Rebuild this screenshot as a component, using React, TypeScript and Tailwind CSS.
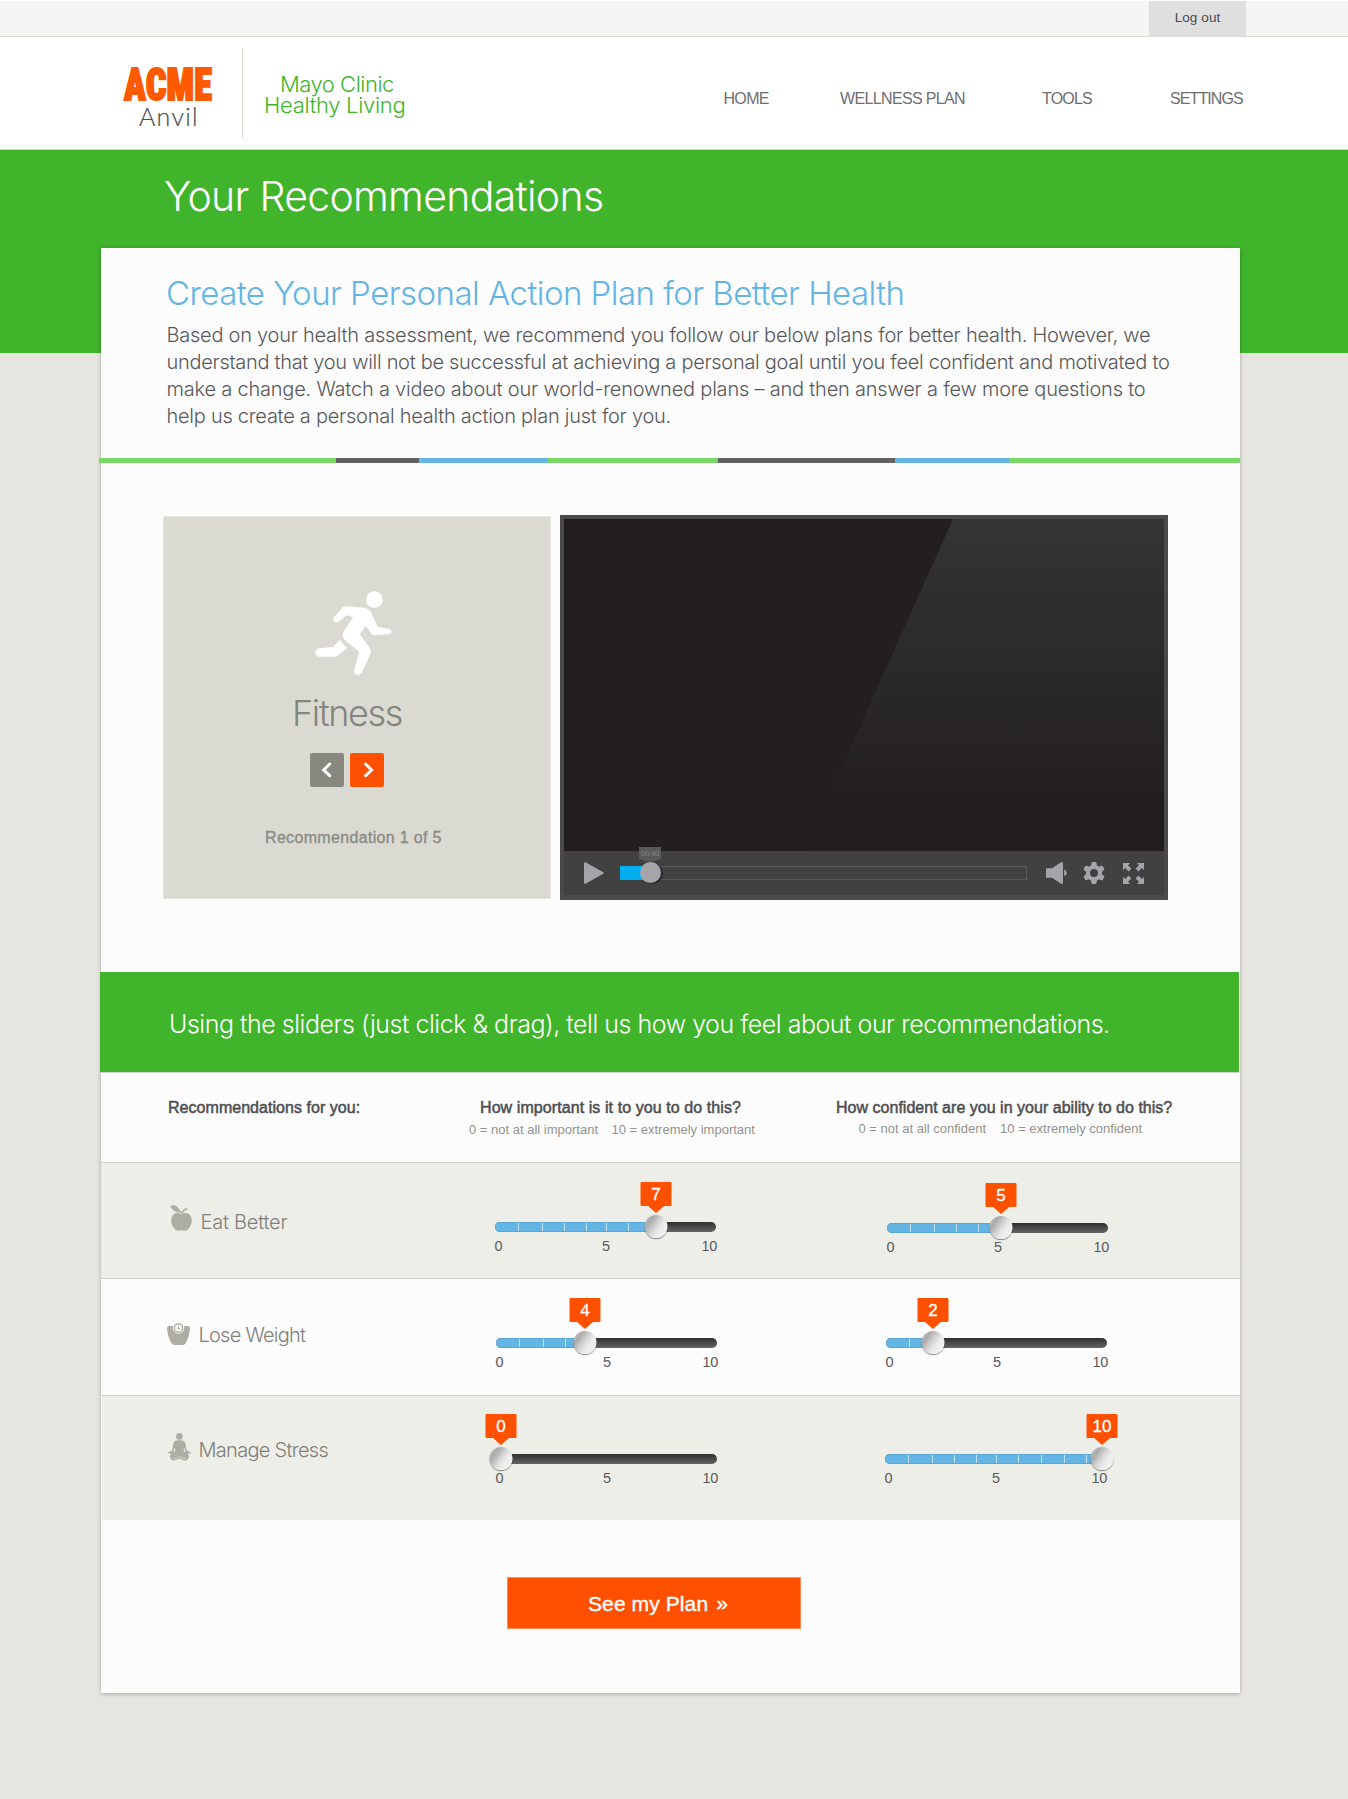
import type { ReactNode } from 'react';

const TICKS = [23, 47, 69.5, 91, 111.7, 133, 156.5, 179, 201];

function RunnerIcon() {
  return (
    <svg viewBox="0 0 231 253" className="h-[84.3px] w-[77px]" fill="#fff">
      <circle cx="178" cy="26" r="25" />
      <path d="M92 46L148 50Q161 52 168 64L189 108L222 113Q231 116 230 123Q228 130 221 130L177 133Q172 133 169 128L153 105L134 128L164 170Q170 178 166 189L142 243Q137 253 127 252Q116 249 117 239L133 182L90 148Q79 136 87 120L114 79L95 73L70 93Q62 96 57 91Q52 85 57 79L81 51Q85 46 92 46Z" />
      <path d="M75 146Q82 161 97 170L71 192Q65 197 57 197H14Q2 196 0 185Q1 174 13 172L54 168Z" />
    </svg>
  );
}

function AppleIcon() {
  return (
    <svg viewBox="0 0 22 26" className="h-[26px] w-[22px]" fill="#adada3">
      <path d="M0.2 0.9C4.6-.9 8.6.9 10 7.2C5.4 7.4 2.4 5.6.2.9Z" />
      <path d="M10.2 8.6C9.8 6.4 8 3.6 5 2.4L5.3 1.9C8.6 3 10.7 5.4 11.4 7.4C12.4 5.2 13.8 3.9 16.4 2.9L18 4.4C15 5 13.3 6.4 12.7 8.6Z" />
      <path d="M11.4 9.6C14 7.6 17.6 7.5 19.8 9.7C22.6 12.6 22.3 18.2 19.6 22.3C17.6 25.4 15.8 26.4 13.4 25.6C12 25.2 11 25.2 9.6 25.6C7.2 26.4 5.4 25.4 3.4 22.3C.7 18.2.4 12.6 3.2 9.7C5.4 7.5 8.8 7.6 11.4 9.6Z" />
    </svg>
  );
}

function ScaleIcon() {
  return (
    <svg viewBox="0 0 23 22" className="h-[22px] w-[23px]" fill="#adada3">
      <path d="M1.6 3H21.4Q23.2 3.4 22.9 5.6C22.6 11 21.4 15 18.6 20.3Q17.6 22 15.8 22H7.2Q5.4 22 4.4 20.3C1.6 15 .4 11 .1 5.6Q-.2 3.4 1.6 3Z" />
      <circle cx="11.5" cy="5" r="5.3" stroke="#fcfcfc" strokeWidth="0.9" />
      <circle cx="11.5" cy="5" r="3.5" fill="#fcfcfc" />
      <circle cx="11.5" cy="5.4" r="1.1" />
      <path d="M11.1 2.5h.8v3h-.8z" />
    </svg>
  );
}

function YogaIcon() {
  return (
    <svg viewBox="0 0 23 28" className="h-[28px] w-[23px]" fill="#adada3">
      <ellipse cx="11.4" cy="3.4" rx="3.3" ry="3.4" />
      <path d="M11.4 7.2C16 7.2 17.3 8.6 17.7 11.4L18.6 17.6L22.6 19.2Q23.4 20.1 22.2 20.6L19.6 20.4C21.4 22.2 21.2 24 20 26Q18.6 28 15.8 27.2L11.4 25.8L7 27.2Q4.2 28 2.8 26C1.6 24 1.6 22.2 3.2 20.4L.8 20.6Q-.6 20.1.4 19.2L4.2 17.6L5.1 11.4C5.5 8.6 6.8 7.2 11.4 7.2Z" />
      <path d="M6.4 14.6L5.6 18.8L6.6 19.4L7.2 16.8ZM16.4 14.6L17.2 18.8L16.2 19.4L15.6 16.8Z" fill="#eeeee8" />
      <path d="M5 25.6C8 26 9.6 24.6 11.4 23.6C13.2 24.6 15 26 18 25.6" fill="none" stroke="#eeeee8" strokeWidth="0.6" />
    </svg>
  );
}

function Slider({ value, knob, className }: { value: number; knob: number; className: string }) {
  return (
    <div className={`relative w-[222px] ${className}`}>
      <div className="relative mt-10 h-2.5 w-[221px] overflow-hidden rounded-full bg-linear-to-b from-[#303030] to-[#656565]">
        <div
          className="relative h-full overflow-hidden border-y border-[#5aa5d4] bg-[#62b5e5]"
          style={{ width: knob }}
        >
          {TICKS.filter((t) => t < knob - 5).map((t) => (
            <span key={t} className="absolute inset-y-0 w-px bg-[#c3e2f4]" style={{ left: t }} />
          ))}
        </div>
      </div>
      <div
        className="absolute top-0 flex w-[31px] -translate-x-1/2 flex-col items-center"
        style={{ left: knob + 0.5 }}
      >
        <span className="h-6 w-full rounded-[1px] bg-[#ff5000] pt-px text-center text-[17px] leading-6 text-white [-webkit-text-stroke:0.3px_white]">
          {value}
        </span>
        <span className="h-[7px] w-4 bg-[#ff5000] [clip-path:polygon(0_0,100%_0,50%_100%)]" />
      </div>
      <div
        className="absolute top-[33px] size-[23px] -translate-x-1/2 rounded-full bg-linear-[125deg,#c4c4c4_8%,#a9a9a9_25%,#d6d6d6_48%,#ececec_65%,#f4f4f4] shadow-[0_1px_1px_rgba(0,0,0,0.45)]"
        style={{ left: knob }}
      />
      <div className="mt-1 flex w-[223px] justify-between text-[14.5px] leading-5 tracking-[-0.3px] text-[#58595b]">
        <span className="w-4">0</span>
        <span className="w-2">5</span>
        <span className="w-4">10</span>
      </div>
    </div>
  );
}

function LightLabel({ className, children }: { className: string; children: ReactNode }) {
  return (
    <span className={`font-[Inter] text-[20px] leading-6 font-light whitespace-nowrap text-[#80807a] ${className}`}>
      {children}
    </span>
  );
}

export default function App() {
  return (
    <div className="min-h-[1799px] w-[1348px] overflow-hidden bg-[#e6e5e0] font-['Liberation_Sans',Arial,sans-serif]">
      <div className="flex h-[37px] justify-end border-t border-b border-t-white border-b-[#dcdcd8] bg-[#f4f4f2] pr-[102px]">
        <a className="w-[97px] bg-[#dfdfdf] pt-[7px] text-center text-[13.5px] leading-5 tracking-[0.1px] text-[#4a4a4a]">
          Log out
        </a>
      </div>

      <header className="flex h-[113px] border-b border-[#cfd0cd] bg-white pl-[124px]">
        <div className="w-[90px] pt-[31px]">
          <div className="w-[105px] origin-left scale-x-[0.805] font-[Roboto] text-[45px] leading-[34px] font-black tracking-[0.2px] whitespace-nowrap text-[#ff5a00] [-webkit-text-stroke:2px_#ff5a00] [font-stretch:75%]">
            ACME
          </div>
          <div className="pl-[15px] font-[Lato] text-[25px] leading-[28px] font-light tracking-[1.3px] text-[#4d4e50] [-webkit-text-stroke:0.2px_#4d4e50]">
            Anvil
          </div>
        </div>
        <div className="mt-[11px] ml-7 h-[90px] w-px bg-[#dedcd6]" />
        <div className="ml-[21px] w-[142px] pt-[36.5px] font-[Inter] text-[22px] leading-[21.6px] font-light whitespace-nowrap text-[#40b42b]">
          <div className="pl-4 tracking-[-0.49px]">Mayo Clinic</div>
          <div className="tracking-[-0.3px]">Healthy Living</div>
        </div>
        <nav className="ml-auto flex w-[624.5px] pt-[51.5px] text-[16px] leading-5 whitespace-nowrap text-[#6d6e70]">
          <a className="w-[116.5px] tracking-[-0.68px]">HOME</a>
          <a className="w-[202px] tracking-[-0.65px]">WELLNESS PLAN</a>
          <a className="w-[128px] tracking-[-0.82px]">TOOLS</a>
          <a className="tracking-[-0.9px]">SETTINGS</a>
        </nav>
      </header>

      <div className="h-[203px] bg-[#40b42b] pt-[22px] pl-[164px]">
        <h1 className="font-[Inter] text-[41px] leading-[48px] font-light tracking-[-0.7px] text-white">
          Your Recommendations
        </h1>
      </div>

      <main className="mx-auto -mt-[105px] ml-[101px] h-[1445px] w-[1139px] bg-[#fcfcfc] shadow-[0_1px_4px_rgba(0,0,0,0.28)]">
        <section className="h-[210px] pt-[25px] pl-[65px] font-[Inter] font-light whitespace-nowrap">
          <h2 className="text-[33px] leading-10 tracking-[-0.53px] text-[#62b5e5]">
            Create Your Personal Action Plan for Better Health
          </h2>
          <p className="mt-[9px] pl-[0.5px] text-[20px] leading-[27px] text-[#58595b]">
            <span className="block tracking-[-0.25px]">
              Based on your health assessment, we recommend you follow our below plans for better health. However, we
            </span>
            <span className="block tracking-[-0.292px]">
              understand that you will not be successful at achieving a personal goal until you feel confident and motivated to
            </span>
            <span className="block tracking-[-0.205px]">
              make a change. Watch a video about our world-renowned plans – and then answer a few more questions to
            </span>
            <span className="block tracking-[-0.26px]">
              help us create a personal health action plan just for you.
            </span>
          </p>
        </section>

        <div className="-ml-0.5 flex h-[5px] w-[1141px]">
          <span className="w-[237px] bg-[#78d967]" />
          <span className="w-[83px] bg-[#616161]" />
          <span className="w-[129px] bg-[#62b5e5]" />
          <span className="w-[170px] bg-[#78d967]" />
          <span className="w-[177px] bg-[#616161]" />
          <span className="w-[114px] bg-[#62b5e5]" />
          <span className="flex-1 bg-[#78d967]" />
        </div>

        <section className="flex h-[509px] items-start pt-[52px] pl-[62px]">
          <div className="mt-px h-[383px] w-[388px] border border-[#e6e6e0] bg-[#dadad2] pt-[74px]">
            <div className="pl-[151px]">
              <RunnerIcon />
            </div>
            <div className="mt-[16px] pl-[128px] font-[Inter] text-[36px] leading-[44px] font-light tracking-[-1.35px] text-[#85857f]">
              Fitness
            </div>
            <div className="mt-[18px] flex gap-1.5 pl-[146px]">
              <button className="flex size-[34px] items-center justify-center rounded-[2px] bg-[#888880]">
                <svg viewBox="0 0 34 34" className="size-[34px]" fill="none" stroke="#fff" strokeWidth="3" strokeLinecap="round">
                  <path d="M19.7 11L13.7 17L19.7 22.7" />
                </svg>
              </button>
              <button className="flex size-[34px] items-center justify-center rounded-[2px] bg-[#ff5000]">
                <svg viewBox="0 0 34 34" className="size-[34px]" fill="none" stroke="#fff" strokeWidth="3" strokeLinecap="round">
                  <path d="M15.6 11L21.6 17L15.6 22.7" />
                </svg>
              </button>
            </div>
            <div className="mt-[41px] pl-[101px] text-[16px] leading-5 tracking-[0.33px] text-[#8b8b84] [-webkit-text-stroke:0.35px_#8b8b84]">
              Recommendation 1 of 5
            </div>
          </div>

          <div className="ml-[9px] h-[385px] w-[608px] border-4 border-b-[5px] border-[#4a4a4b]">
            <div className="relative h-[332px] bg-[#231f20]">
              <div className="absolute inset-0 bg-linear-to-b from-[#343435] to-[#231f20] to-85% [clip-path:polygon(389px_0,100%_0,100%_100%,240px_100%)]" />
            </div>
            <div className="flex h-11 items-center bg-[#414141] pl-5">
              <svg viewBox="0 0 20 22" className="h-[22px] w-5" fill="#a5a5a9">
                <path d="M0 1.4Q.3-.4 2 .5L19.3 10.2Q20.4 11 19.3 11.8L2 21.5Q.3 22.4 0 20.6Z" />
              </svg>
              <div className="relative ml-4 h-[14px] w-[407px] border border-[#58585b]">
                <div className="-mt-px -ml-px h-[14px] w-6 bg-[#00aeef]" />
                <div className="absolute -top-[20px] left-[18px] flex w-[22px] flex-col items-center">
                  <span className="h-[12px] w-full bg-[#58595b] text-center text-[8px] leading-[13px] tracking-[-0.3px] text-[#85868a]">
                    00:40
                  </span>
                  <span className="h-[3px] w-full bg-[#58595b] [clip-path:polygon(0_0,100%_0,50%_100%)]" />
                </div>
                <div className="absolute -top-[5px] left-[19px] size-[21px] rounded-full bg-[#a5a5a9] shadow-[2px_1px_1px_rgba(0,0,0,0.4)]" />
              </div>
              <svg viewBox="0 0 21 22" className="ml-[19px] h-[22px] w-[21px]" fill="#a5a5a9">
                <path d="M0 6.2H6L14.6.4Q17 -.5 17 1V21Q17 22.5 14.6 21.6L6 15.8H0Z" />
                <path d="M18.2 7.6Q20.8 8.4 20.8 11T18.2 14Z" />
              </svg>
              <svg viewBox="-11 -11 22 22" className="ml-[15.5px] size-[22px]" fill="#a5a5a9">
                {[0, 60, 120, 180, 240, 300].map((a) => (
                  <path key={a} d="M-3.6-5L-2.4-10.2Q-2.2-11-1.4-11H1.4Q2.2-11 2.4-10.2L3.6-5Z" transform={`rotate(${a})`} />
                ))}
                <circle r="6" fill="none" stroke="#a5a5a9" strokeWidth="4" />
              </svg>
              <svg viewBox="0 0 21 21" className="ml-[18.5px] size-[21px]" fill="#a5a5a9">
                {[0, 90, 180, 270].map((a) => (
                  <path key={a} d="M0 0H7L5 2.2L8.4 5.6L5.6 8.4L2.2 5L0 7Z" transform={`rotate(${a} 10.5 10.5)`} />
                ))}
              </svg>
            </div>
          </div>
        </section>

        <div className="-ml-px h-[101px] w-[1139px] border-b border-[#cfd3cb] bg-[#40b42b] pt-[37px] pl-[69px] font-[Inter] text-[25px] leading-[30px] font-light tracking-[-0.483px] whitespace-nowrap text-white">
          Using the sliders (just click &amp; drag), tell us how you feel about our recommendations.
        </div>

        <div className="flex h-[90px] border-b border-[#cfd1cb] pt-[24.5px] text-[16px] leading-5 whitespace-nowrap text-[#4d4e50]">
          <div className="w-[368px] pl-[67px] tracking-[0.04px] [-webkit-text-stroke:0.5px_#4d4e50]">
            Recommendations for you:
          </div>
          <div className="w-[367px]">
            <div className="pl-[11px] tracking-[0.08px] [-webkit-text-stroke:0.5px_#4d4e50]">
              How important is it to you to do this?
            </div>
            <div className="mt-[3px] flex gap-[13.5px] text-[13px] leading-[18px] text-[#93938d]">
              <span>0 = not at all important</span>
              <span>10 = extremely important</span>
            </div>
          </div>
          <div>
            <div className="tracking-[0.02px] [-webkit-text-stroke:0.5px_#4d4e50]">
              How confident are you in your ability to do this?
            </div>
            <div className="mt-[2px] flex gap-[14px] pl-[22.5px] text-[13px] leading-[18px] text-[#93938d]">
              <span>0 = not at all confident</span>
              <span>10 = extremely confident</span>
            </div>
          </div>
        </div>

        <div className="grid h-[116px] grid-cols-[393px_392px_1fr] border-b border-[#cfd1cb] bg-[#eeeee8]">
          <div className="flex gap-[9px] pt-[42px] pl-[68.5px]">
            <AppleIcon />
            <LightLabel className="mt-[5px] tracking-[-0.22px]">Eat Better</LightLabel>
          </div>
          <Slider value={7} knob={161} className="mt-[19px] ml-[0.5px]" />
          <Slider value={5} knob={114} className="mt-5 ml-[0.5px]" />
        </div>

        <div className="grid h-[117px] grid-cols-[393px_392px_1fr] border-b border-[#cfd1cb]">
          <div className="flex gap-[9px] pt-11 pl-[65.5px]">
            <ScaleIcon />
            <LightLabel className="tracking-[-0.76px]">Lose Weight</LightLabel>
          </div>
          <Slider value={4} knob={89} className="mt-[19px] ml-[1.5px]" />
          <Slider value={2} knob={47} className="mt-[19px] -ml-[0.5px]" />
        </div>

        <div className="ml-px grid h-[124px] grid-cols-[392px_392px_1fr] bg-[#eeeee8]">
          <div className="flex gap-2 pt-[37px] pl-[65.5px]">
            <YogaIcon />
            <LightLabel className="mt-[5px] tracking-[-0.7px]">Manage Stress</LightLabel>
          </div>
          <Slider value={0} knob={5} className="mt-[18px] ml-[1.5px]" />
          <Slider value={10} knob={217} className="mt-[18px] -ml-[1.5px]" />
        </div>

        <button className="mt-[57px] ml-[406px] flex h-[52px] w-[294px] border border-[#ff8a55] bg-[#ff5000] pt-[14px] pl-[80px] text-[21px] leading-6 tracking-[0.1px] text-white [-webkit-text-stroke:0.4px_white]">
          See my Plan
          <span className="ml-2 leading-[22px]">»</span>
        </button>
      </main>
    </div>
  );
}
